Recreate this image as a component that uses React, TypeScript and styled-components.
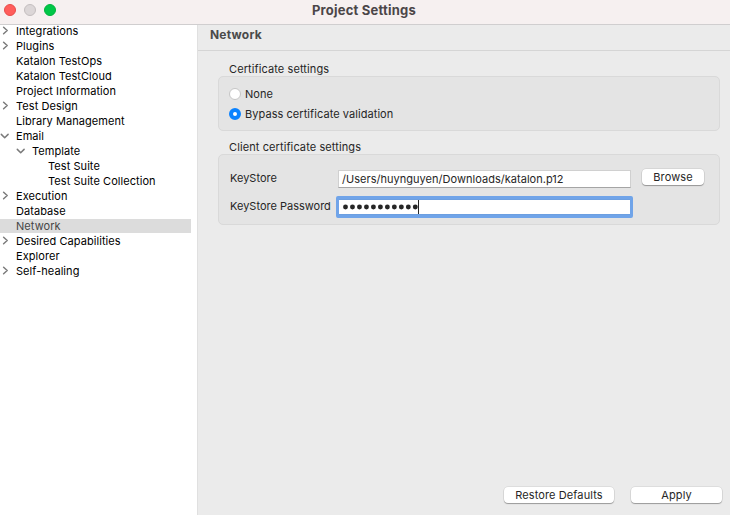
import React from "react";
import styled, { createGlobalStyle, css } from "styled-components";

const GlobalStyle = createGlobalStyle`
  * { box-sizing: border-box; }
  body { margin: 0; overflow: hidden; }
`;

const Window = styled.div`
  display: flex;
  flex-direction: column;
  width: 730px;
  height: 515px;
  background: #ebebeb;
  color: #262626;
  font: 11px/15px Inter, sans-serif;
  letter-spacing: 0.06px;
  white-space: nowrap;
`;

const TitleBar = styled.header`
  display: grid;
  grid-template-columns: 60px 1fr 62px;
  align-items: center;
  flex: none;
  height: 24px;
  background: #f6f0f0;
  box-shadow: 0 1px #d0cecf;
  z-index: 1;
`;

const Lights = styled.div`
  display: flex;
  gap: 8px;
  padding: 0 0 4px 4px;
`;

const Light = styled.span<{ $fill: string; $edge: string }>`
  width: 12px;
  height: 12px;
  border-radius: 50%;
  background: ${(p) => p.$fill};
  border: 1px solid ${(p) => p.$edge};
`;

const Title = styled.h1`
  margin: 0;
  padding: 0 0 5px;
  text-align: center;
  font-size: 13px;
  line-height: 16px;
  font-weight: 700;
  letter-spacing: 0.22px;
  color: #4b4648;
`;

const Body = styled.div`
  display: flex;
  flex: 1;
`;

const Sidebar = styled.nav`
  width: 198px;
  background: #fff;
  border-right: 1px solid #e0e0e0;
  color: #000;
`;

const TreeRow = styled.div<{ $level: number; $selected?: boolean }>`
  display: flex;
  align-items: center;
  width: 191px;
  height: 14px;
  margin-bottom: 1px;
  padding-left: ${(p) => p.$level * 16}px;
  ${(p) =>
    p.$selected &&
    css`
      background: #dcdcdc;
      color: #464646;
    `}
`;

const Twisty = styled.span`
  display: flex;
  flex: none;
  width: 16px;

  svg {
    fill: none;
    stroke: #7b7b7b;
    stroke-width: 1.5;
    stroke-linecap: round;
    stroke-linejoin: round;
  }
`;

const Main = styled.main`
  display: flex;
  flex-direction: column;
  flex: 1;
`;

const PageTitle = styled.h2`
  margin: 0;
  height: 27px;
  padding: 3px 12px 0;
  border-bottom: 1px solid #d5d5d5;
  font-size: 12px;
  font-weight: 700;
  letter-spacing: 0.22px;
  color: #4a4a4a;
`;

const Content = styled.div`
  display: flex;
  flex-direction: column;
  flex: 1;
  padding: 10px 10px 0 20px;
`;

const Group = styled.section`
  margin-bottom: 8px;
`;

const Legend = styled.div`
  height: 15px;
  padding-left: 11px;
  line-height: 17px;
  letter-spacing: 0.1px;
`;

const Panel = styled.div<{ $height: number }>`
  height: ${(p) => p.$height}px;
  border: 1px solid #d9d9d9;
  border-radius: 5px;
  background: #e4e4e4;
`;

const RadioList = styled(Panel)`
  display: flex;
  flex-direction: column;
  gap: 5px;
  padding: 10px;
`;

const RadioRow = styled.label`
  display: flex;
  align-items: flex-start;
  gap: 4px;
  height: 15px;
`;

const Radio = styled.span<{ $checked?: boolean }>`
  width: 12px;
  height: 12px;
  margin-top: 1px;
  border-radius: 50%;
  border: ${(p) => (p.$checked ? "4px solid #0a82ff" : "1px solid #c6c6c6")};
  background: #fff;
`;

const Form = styled(Panel)`
  display: grid;
  grid-template-columns: 108px 293px 63px;
  grid-template-rows: 18px 22px;
  row-gap: 8px;
  padding: 15px 0 0 11px;
`;

const FieldLabel = styled.label<{ $lift?: boolean }>`
  line-height: ${(p) => (p.$lift ? "16px" : "20px")};
  letter-spacing: 0;
`;

const Field = styled.div`
  display: flex;
  align-items: center;
  height: 18px;
  padding: 1px 0 0 3px;
  background: #fff;
  border: 1px solid #d0d0d0;
  border-bottom-color: #a5a5a5;
  letter-spacing: 0.03px;
`;

const FocusedField = styled.div`
  display: flex;
  align-items: center;
  height: 22px;
  margin: 0 -2px;
  padding-left: 3px;
  background: #fff;
  border: 3px solid #70a4e9;
  border-radius: 2px;
  box-shadow: inset 0 1px #6d9fe0, inset 0 -1px #6d9fe0;
`;

const Dots = styled.svg`
  fill: #262626;
`;

const PushButton = styled.button<{ $width: number }>`
  display: block;
  width: ${(p) => p.$width}px;
  height: 16px;
  padding: 0;
  border: 0;
  border-radius: 4px;
  background: #fff;
  box-shadow: 0 0 0 0.5px rgba(0, 0, 0, 0.12), 0 1px 1px rgba(0, 0, 0, 0.3);
  color: #262626;
  font: inherit;
  letter-spacing: 0.1px;
`;

const BrowseSlot = styled.div`
  margin: -1px 0 0 11px;
`;

const Footer = styled.footer`
  display: flex;
  justify-content: flex-end;
  gap: 17px;
  margin-top: auto;
  padding: 0 8px 12px 0;
`;

type Item = { label: string; level?: number; state?: "open" | "closed"; selected?: boolean };

const items: Item[] = [
  { label: "Integrations", state: "closed" },
  { label: "Plugins", state: "closed" },
  { label: "Katalon TestOps" },
  { label: "Katalon TestCloud" },
  { label: "Project Information" },
  { label: "Test Design", state: "closed" },
  { label: "Library Management" },
  { label: "Email", state: "open" },
  { label: "Template", level: 1, state: "open" },
  { label: "Test Suite", level: 2 },
  { label: "Test Suite Collection", level: 2 },
  { label: "Execution", state: "closed" },
  { label: "Database" },
  { label: "Network", selected: true },
  { label: "Desired Capabilities", state: "closed" },
  { label: "Explorer" },
  { label: "Self-healing", state: "closed" },
];

export default function App() {
  return (
    <>
      <GlobalStyle />
      <Window>
        <TitleBar>
          <Lights>
            <Light $fill="#ff5d5b" $edge="#e84b49" />
            <Light $fill="#dcd6d7" $edge="#c4bebf" />
            <Light $fill="#00c748" $edge="#00b33c" />
          </Lights>
          <Title>Project Settings</Title>
        </TitleBar>
        <Body>
          <Sidebar>
            {items.map((item) => (
              <TreeRow key={item.label} $level={item.level ?? 0} $selected={item.selected}>
                <Twisty>
                  {item.state && (
                    <svg width="11" height="10" viewBox="0 0 11 10">
                      <path d={item.state === "open" ? "M1.3 3.4 L4.7 6.8 L8.1 3.4" : "M3.6 1.2 L7.2 4.5 L3.6 7.8"} />
                    </svg>
                  )}
                </Twisty>
                {item.label}
              </TreeRow>
            ))}
          </Sidebar>
          <Main>
            <PageTitle>Network</PageTitle>
            <Content>
              <Group>
                <Legend>Certificate settings</Legend>
                <RadioList $height={55}>
                  <RadioRow>
                    <Radio />
                    None
                  </RadioRow>
                  <RadioRow>
                    <Radio $checked />
                    Bypass certificate validation
                  </RadioRow>
                </RadioList>
              </Group>
              <Group>
                <Legend>Client certificate settings</Legend>
                <Form $height={71}>
                  <FieldLabel $lift>KeyStore</FieldLabel>
                  <Field>/Users/huynguyen/Downloads/katalon.p12</Field>
                  <BrowseSlot>
                    <PushButton $width={62}>Browse</PushButton>
                  </BrowseSlot>
                  <FieldLabel>KeyStore Password</FieldLabel>
                  <FocusedField>
                    <Dots width="80" height="14">
                      {Array.from({ length: 11 }, (_, i) => (
                        <circle key={i} cx={3.5 + i * 6.98} cy="7" r="2.45" />
                      ))}
                      <rect x="76" y="0" width="1" height="14" />
                    </Dots>
                  </FocusedField>
                </Form>
              </Group>
            </Content>
            <Footer>
              <PushButton $width={110}>Restore Defaults</PushButton>
              <PushButton $width={91}>Apply</PushButton>
            </Footer>
          </Main>
        </Body>
      </Window>
    </>
  );
}
